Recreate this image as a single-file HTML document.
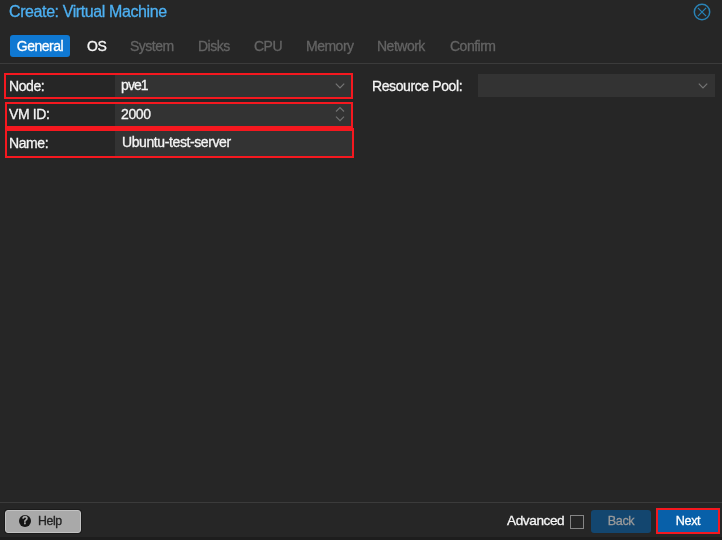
<!DOCTYPE html>
<html><head><meta charset="utf-8">
<style>
html,body{margin:0;padding:0;}
body{width:722px;height:540px;background:#262626;overflow:hidden;position:relative;font-family:"Liberation Sans",Arial,Helvetica,sans-serif;font-size:13px;color:#f5f5f5;letter-spacing:-0.4px;-webkit-text-stroke:0.3px;}
.abs{position:absolute;will-change:transform;}
#title{left:9px;top:2px;font-size:16px;color:#4db0f2;line-height:20px;white-space:nowrap;}
.tab{top:35px;height:22px;line-height:22px;font-size:14px;color:#646464;white-space:nowrap;letter-spacing:-0.5px;}
#tab-general{left:10px;width:60px;background:#0f78d2;color:#fff;border-radius:3px;text-align:center;}
#sep1{left:0;top:63px;width:722px;height:1px;background:#3b3b3b;}
.lbl{font-size:14px;line-height:16px;height:16px;color:#f5f5f5;white-space:nowrap;}
.inp{background:#333333;}
.txt{font-size:14px;line-height:16px;height:16px;color:#f5f5f5;white-space:nowrap;}
.red{border:2px solid #f5181f;box-sizing:border-box;}
#bottom-sep{left:0;top:502px;width:722px;height:1px;background:#3b3b3b;}
.btn{height:23px;line-height:23px;font-size:12.6px;border-radius:3px;text-align:center;box-sizing:border-box;white-space:nowrap;}
</style></head><body>
<div id="title" class="abs">Create: Virtual Machine</div>
<svg class="abs" style="left:692.2px;top:2.1px" width="20" height="20" viewBox="0 0 20 20"><circle cx="10" cy="10" r="7.7" fill="none" stroke="#2a82b4" stroke-width="1.5"/><path d="M5.9 5.9 L14.1 14.1 M14.1 5.9 L5.9 14.1" stroke="#2583b8" stroke-width="1.2" fill="none"/></svg>

<div id="tab-general" class="abs tab">General</div>
<div class="abs tab" style="left:86.6px;color:#f5f5f5;">OS</div>
<div class="abs tab" style="left:130px;">System</div>
<div class="abs tab" style="left:198px;">Disks</div>
<div class="abs tab" style="left:254px;">CPU</div>
<div class="abs tab" style="left:305.5px;">Memory</div>
<div class="abs tab" style="left:377px;">Network</div>
<div class="abs tab" style="left:450px;">Confirm</div>
<div id="sep1" class="abs"></div>

<!-- field backgrounds -->
<div class="abs inp" style="left:115.4px;top:74px;width:237px;height:24px;"></div>
<div class="abs inp" style="left:115.4px;top:103px;width:237px;height:24px;"></div>
<div class="abs inp" style="left:115.4px;top:130px;width:238px;height:27px;"></div>
<!-- field values -->
<div class="abs txt" style="left:121px;top:77px;letter-spacing:-0.9px;">pve1</div>
<div class="abs txt" style="left:121px;top:106px;">2000</div>
<div class="abs txt" style="left:121.5px;top:134px;">Ubuntu-test-server</div>
<!-- labels -->
<div class="abs lbl" style="left:9px;top:78px;">Node:</div>
<div class="abs lbl" style="left:9px;top:106px;">VM ID:</div>
<div class="abs lbl" style="left:9px;top:134.5px;">Name:</div>
<!-- red highlight boxes -->
<div class="abs red" style="left:4px;top:73px;width:349.2px;height:26px;"></div>
<div class="abs red" style="left:5px;top:102px;width:348.2px;height:26px;border-width:2.3px 2.2px 2px 2px;"></div>
<div class="abs red" style="left:5px;top:128px;width:349.2px;height:30px;border-width:3px 2.2px 2.4px 2px;"></div>
<svg class="abs" style="left:334.2px;top:80.7px" width="12" height="10" viewBox="0 0 12 10"><path d="M1.8 2.7 L6 7 L10.2 2.7" stroke="#757575" stroke-width="1.2" fill="none"/></svg>
<svg class="abs" style="left:334.2px;top:105px" width="12" height="18" viewBox="0 0 12 18"><path d="M2 6.5 L6 2.5 L10 6.5 M2 11.7 L6 15.7 L10 11.7" stroke="#707070" stroke-width="1.2" fill="none"/></svg>

<div class="abs lbl" style="left:372px;top:78px;">Resource Pool:</div>
<div class="abs inp" style="left:478.2px;top:74px;width:236.5px;height:23px;"></div>
<svg class="abs" style="left:697px;top:80.6px" width="12" height="10" viewBox="0 0 12 10"><path d="M1.8 2.7 L6 7 L10.2 2.7" stroke="#757575" stroke-width="1.2" fill="none"/></svg>

<div id="bottom-sep" class="abs"></div>
<!-- Help button -->
<div class="abs" style="left:3.8px;top:508.7px;width:77.6px;height:25.4px;border-radius:4px;background:#1b1b1b;"></div>
<div class="abs btn" style="left:4.8px;top:509.7px;width:75.6px;height:23.4px;background:#a9a9a9;border:1px solid #c2c2c2;"></div>
<div class="abs" style="left:19px;top:515.4px;width:12px;height:12px;border-radius:6px;background:#151515;color:#b0b0b0;font-size:10px;font-weight:bold;line-height:12.5px;text-align:center;letter-spacing:0;">?</div>
<div class="abs" style="left:38.4px;top:513.4px;font-size:12.3px;line-height:16px;color:#222;white-space:nowrap;">Help</div>

<div class="abs lbl" style="left:507px;top:513px;font-size:13.6px;">Advanced</div>
<div class="abs" style="left:570px;top:514.5px;width:14px;height:13.5px;box-sizing:border-box;border:1.5px solid #858585;background:#262626;"></div>
<div class="abs btn" style="left:591.1px;top:510px;width:60px;background:#13466f;color:#9a9a9a;">Back</div>
<div class="abs" style="left:655.5px;top:508.3px;width:63.8px;height:26.1px;box-sizing:border-box;border:2.1px solid #f5181f;background:#0860a9;"></div>
<div class="abs btn" style="left:657.5px;top:510px;width:60px;color:#fff;">Next</div>

<!-- window frame edges -->
<div class="abs" style="left:0;top:536.5px;width:722px;height:3.5px;background:#1d1d1d;"></div>
</body></html>
